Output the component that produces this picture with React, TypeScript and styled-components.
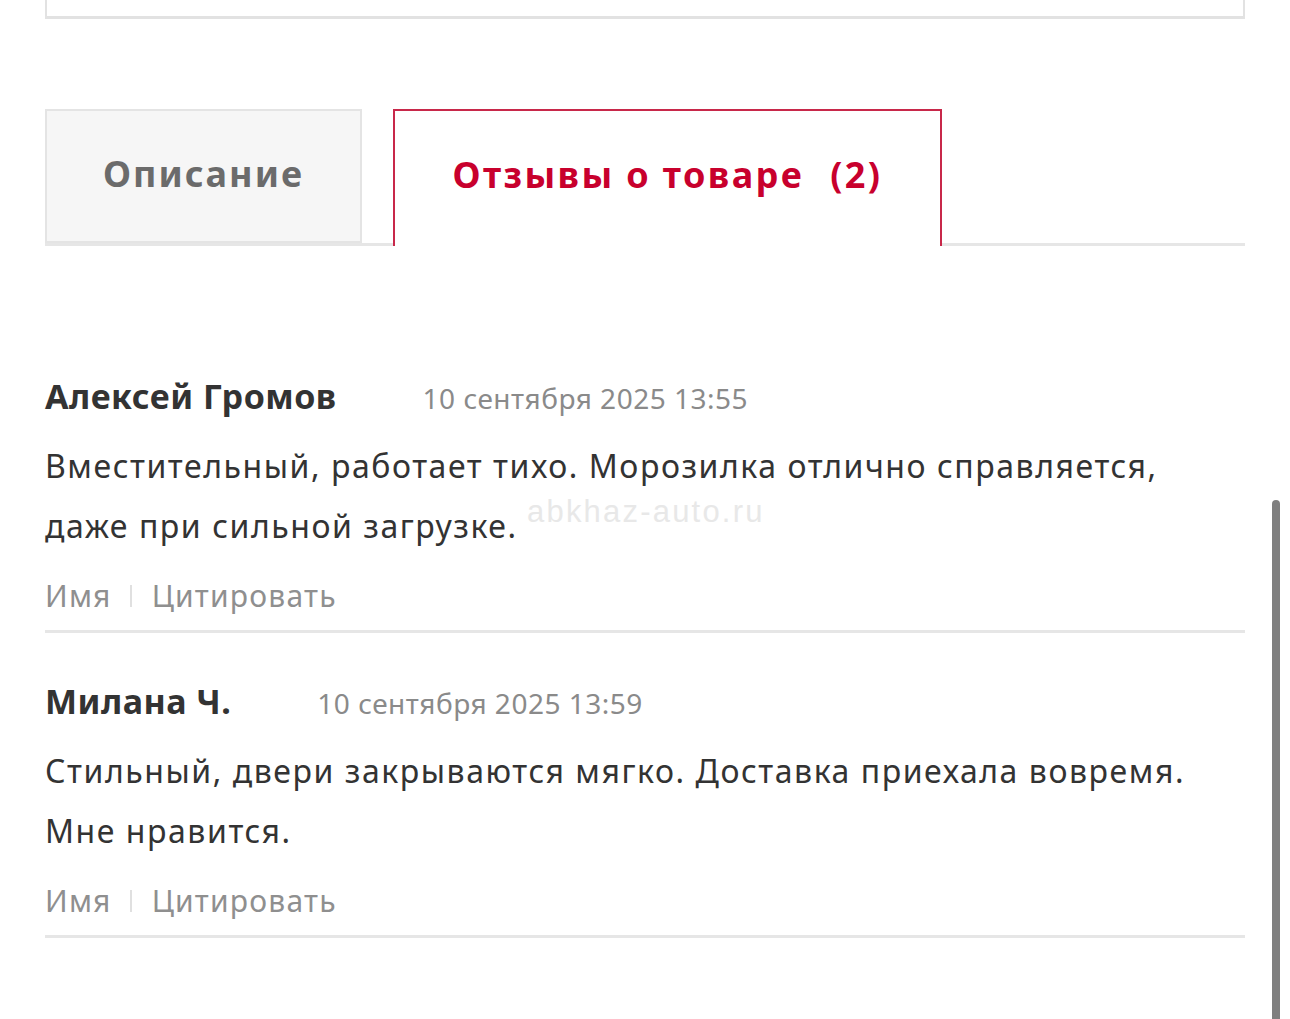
import React from "react";
import styled, { createGlobalStyle } from "styled-components";

const Global = createGlobalStyle`
  html, body { margin: 0; padding: 0; background: #fff; }
  body { font-family: "Noto Sans", "Open Sans", sans-serif; color: #333; overflow: hidden; }
`;

const Page = styled.div`
  width: 1290px;
  height: 1019px;
  position: relative;
  padding: 0 45px;
  box-sizing: border-box;
`;

const TopBox = styled.div`
  height: 16px;
  border: 2px solid #e2e2e2;
  border-top: none;
  border-bottom-width: 3px;
`;

const Tabs = styled.div`
  margin-top: 90px;
  display: flex;
  gap: 31px;
  height: 137px;
  border-bottom: 3px solid #e6e6e6;
  box-sizing: border-box;
`;

const Tab = styled.div<{ $active?: boolean }>`
  width: ${(p) => (p.$active ? 549 : 317)}px;
  box-sizing: border-box;
  display: flex;
  align-items: center;
  justify-content: center;
  font-weight: 700;
  font-size: 36px;
  letter-spacing: ${(p) => (p.$active ? "2.4px" : "2px")};
  white-space: pre;
  height: ${(p) => (p.$active ? "137px" : "134px")};
  background: ${(p) => (p.$active ? "#fff" : "#f6f6f6")};
  color: ${(p) => (p.$active ? "#c8002d" : "#6b6b6b")};
  border: 2px solid ${(p) => (p.$active ? "#c8284a" : "#e4e4e4")};
  border-bottom: ${(p) => (p.$active ? "none" : "2px solid #e4e4e4")};
  padding-bottom: ${(p) => (p.$active ? "9px" : "6px")};
`;

const Count = styled.span`
  margin-left: 26px;
`;

const Reviews = styled.div`
  margin-top: 130px;
`;

const Review = styled.div`
  border-bottom: 3px solid #e6e6e6;
  padding-bottom: 14px;
  margin-bottom: 48px;
`;

const Head = styled.div`
  display: flex;
  align-items: baseline;
  gap: 86px;
`;

const Name = styled.span`
  font-weight: 700;
  font-size: 34px;
  line-height: 40px;
  letter-spacing: 0.5px;
  color: #333;
`;

const DateText = styled.span`
  font-size: 28px;
  letter-spacing: 0.5px;
  color: #8a8a8a;
`;

const Body = styled.p`
  margin: 19px 0 0;
  font-size: 32px;
  line-height: 60px;
  letter-spacing: 1.55px;
  color: #333;
`;

const Actions = styled.div`
  margin-top: 19px;
  display: flex;
  align-items: center;
  font-size: 30px;
  letter-spacing: 1.2px;
  color: #8f8f8f;
`;

const Sep = styled.span`
  width: 2px;
  height: 22px;
  background: #e0e0e0;
  margin: 0 20px 0 18px;
`;

const Watermark = styled.div`
  position: absolute;
  left: 527px;
  top: 494px;
  font-family: "Liberation Sans", Arial, sans-serif;
  font-size: 31px;
  letter-spacing: 2.2px;
  color: #e8e8e8;
  pointer-events: none;
`;

const Scrollbar = styled.div`
  position: absolute;
  left: 1272px;
  top: 500px;
  width: 8px;
  height: 540px;
  border-radius: 4px;
  background: #7f7f7f;
`;

const data = [
  {
    name: "Алексей Громов",
    date: "10 сентября 2025 13:55",
    text: "Вместительный, работает тихо. Морозилка отлично справляется, даже при сильной загрузке.",
  },
  {
    name: "Милана Ч.",
    date: "10 сентября 2025 13:59",
    text: "Стильный, двери закрываются мягко. Доставка приехала вовремя. Мне нравится.",
  },
];

export default function App() {
  return (
    <Page>
      <Global />
      <TopBox />
      <Tabs>
        <Tab>Описание</Tab>
        <Tab $active>
          Отзывы о товаре<Count>(2)</Count>
        </Tab>
      </Tabs>
      <Reviews>
        {data.map((r) => (
          <Review key={r.name}>
            <Head>
              <Name>{r.name}</Name>
              <DateText>{r.date}</DateText>
            </Head>
            <Body>{r.text}</Body>
            <Actions>
              <span>Имя</span>
              <Sep />
              <span>Цитировать</span>
            </Actions>
          </Review>
        ))}
      </Reviews>
      <Watermark>abkhaz-auto.ru</Watermark>
      <Scrollbar />
    </Page>
  );
}
